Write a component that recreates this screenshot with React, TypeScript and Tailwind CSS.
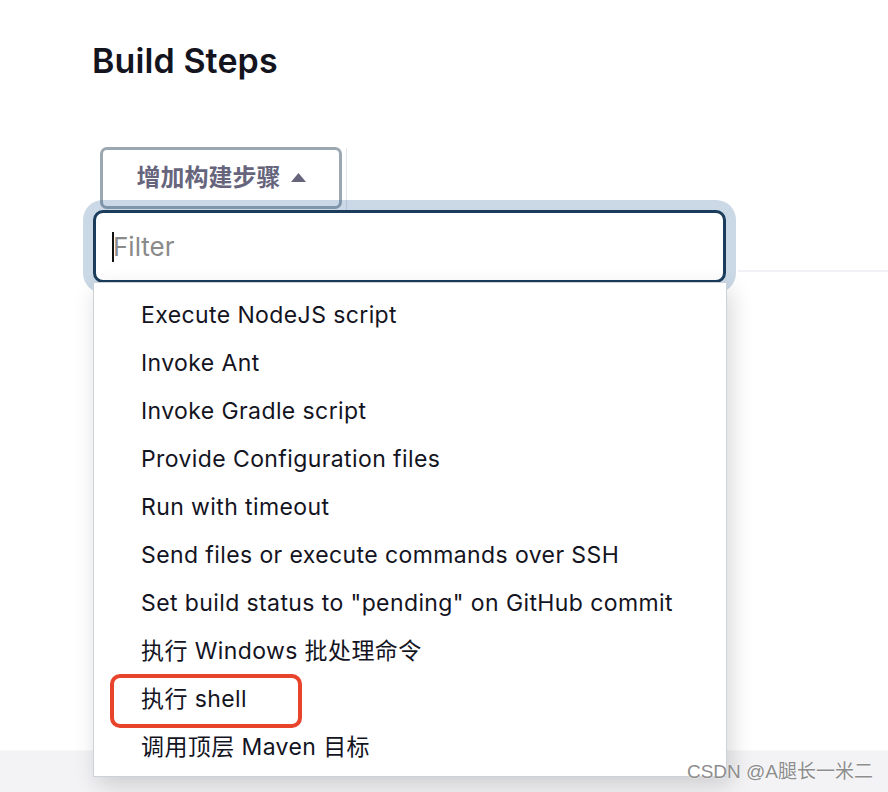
import React from "react";

const steps = [
    "Execute NodeJS script",
    "Invoke Ant",
    "Invoke Gradle script",
    "Provide Configuration files",
    "Run with timeout",
    "Send files or execute commands over SSH",
    'Set build status to "pending" on GitHub commit',
    "执行 Windows 批处理命令",
    "执行 shell",
    "调用顶层 Maven 目标",
];

export default function App() {
    return (
        <div className="relative w-[888px] h-[792px] overflow-hidden bg-white flex flex-col font-['Inter','Noto_Sans_CJK_SC',sans-serif]">
            {/* Heading */}
            <h2 className="ml-[92px] mt-[40px] text-[34px] leading-[42px] font-semibold text-[#14141f] tracking-[0.1px]">
                Build Steps
            </h2>

            {/* Add step button */}
            <div className="mt-[65px] flex items-start">
                <button className="ml-[100px] w-[242px] h-[62px] border-[3px] border-[#9ba7b1] rounded-[7px] flex items-center justify-center gap-[10px] text-[24px] font-semibold text-[#66657c] bg-white">
                    <span>增加构建步骤</span>
                    <svg width="15" height="9" viewBox="0 0 15 9" className="mt-[-2px]">
                        <path d="M7.5 0 L15 9 L0 9 Z" fill="#66657c" />
                    </svg>
                </button>
                <div className="ml-[4px] mt-[1px] w-px h-[62px] bg-[#e1e7ee]" />
            </div>

            {/* Filter input */}
            <div className="flex items-start">
                <div className="ml-[93px] w-[633px] h-[73px] rounded-[10px] border-[3px] border-[#1b3c5b] bg-white ring-[10px] ring-[rgba(36,93,150,0.24)] flex items-center pl-[16px] z-10">
                    <span className="w-[2px] h-[30px] bg-[#111]" />
                    <span className="text-[26px] text-[#8a8a8a] ml-[-1px]">Filter</span>
                </div>
                <div className="flex-1 ml-[12px] mt-[60px] h-[2px] bg-[#f0f0f6]" />
            </div>

            <div className="flex-1" />

            {/* Bottom section */}
            <div className="h-[42px] bg-[#f3f3f6] border-t border-[#f8f8fa]" />

            {/* Dropdown menu */}
            <div className="absolute left-[93px] top-[282px] w-[634px] h-[495px] bg-white border border-[#cdd2d8] shadow-[4px_8px_22px_rgba(0,0,0,0.16)] pt-[8px] z-20">
                {steps.map((s) => (
                    <div key={s} className="h-[48px] flex items-center pl-[47px] text-[23px] tracking-[0.4px] text-[#14141f] whitespace-nowrap">
                        {s}
                    </div>
                ))}
                <div className="absolute left-[16px] top-[391px] w-[192px] h-[54px] border-[4px] border-[#e8432b] rounded-[10px]" />
            </div>

            {/* Watermark */}
            <div className="absolute right-[15px] bottom-[6px] z-30 text-[19px] text-[#8d8d8d] font-['Liberation_Sans','Noto_Sans_CJK_SC',sans-serif] [text-shadow:0_0_2px_#fff]">
                CSDN @A腿长一米二
            </div>
        </div>
    );
}
